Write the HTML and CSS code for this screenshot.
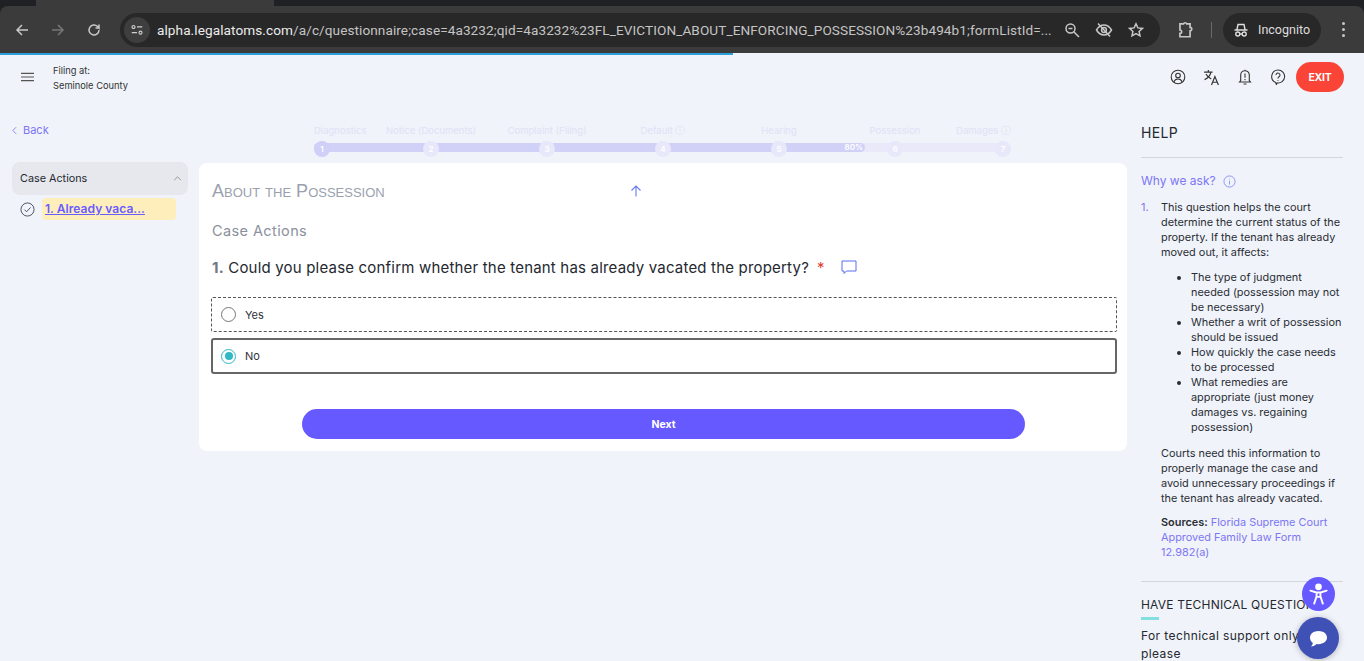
FILE: index.html
```html
<!DOCTYPE html>
<html lang="en">
<head>
<meta charset="utf-8">
<title>Questionnaire</title>
<link rel="stylesheet" href="styles.css">
</head>
<body>
<div class="browser">
  <div class="tabstrip"><div class="tab"></div></div>
  <div class="toolbar">
    <svg class="bi nav-first" viewBox="0 0 16 16"><path d="M14 8H3M8 3 3 8l5 5"/></svg>
    <svg class="bi dim" viewBox="0 0 16 16"><path d="M2 8h11M8 3l5 5-5 5"/></svg>
    <svg class="bi" viewBox="0 0 16 16"><path d="M13 8a5 5 0 1 1-1.6-3.7L13 6V2.5M13 6H9.5"/></svg>
    <div class="omnibox">
      <span class="site-btn"><svg viewBox="0 0 16 16"><circle cx="4" cy="4.500" r="1.700"/><path d="M8 4.500h6M2 11h6"/><circle cx="12" cy="11" r="1.700"/></svg></span>
      <span class="url"><b>alpha.legalatoms.com</b>/a/c/questionnaire;case=4a3232;qid=4a3232%23FL_EVICTION_ABOUT_ENFORCING_POSSESSION%23b494b1;formListId=...</span>
      <svg class="bi zoom-ic" viewBox="0 0 16 16"><circle cx="6.500" cy="6.500" r="4.500"/><path d="m10 10 5 5M4.500 6.500h4"/></svg>
      <svg class="bi eye-ic" viewBox="0 0 18 16"><path d="M1.500 8S4.500 3 9 3s7.500 5 7.500 5-3 5-7.500 5-7.500-5-7.500-5Z"/><circle cx="9" cy="8" r="2.400"/><path d="m3 1.500 12 13"/></svg>
      <svg class="bi star-ic" viewBox="0 0 16 16"><path d="m8 1.800 1.900 4.100 4.500.5-3.300 3 .9 4.400L8 11.600l-4 2.200.9-4.400-3.300-3 4.500-.5Z"/></svg>
    </div>
    <svg class="bi ext-ic" viewBox="0 0 16 16"><path d="M3.500 2.500h3.200a1.500 1.500 0 0 1 2.800 0h3v3.200a1.500 1.500 0 0 1 0 3V14h-9v-3a1.500 1.500 0 0 0 0-3Z"/></svg>
    <span class="tool-sep"></span>
    <div class="incognito">
      <svg viewBox="0 0 16 16"><path d="M1.500 8h13M4 7.500l1-5h6l1 5"/><circle cx="4.800" cy="12" r="2"/><circle cx="11.200" cy="12" r="2"/><path d="M6.800 12h2.400"/></svg>
      <span>Incognito</span>
    </div>
    <span class="kebab"><i></i><i></i><i></i></span>
  </div>
</div>
<div class="load-line"><span></span></div>

<header class="app-head">
  <svg class="menu-ic" viewBox="0 0 14 10"><path d="M0 1h14M0 5h14M0 9h14"/></svg>
  <div class="filing"><p>Filing at:</p><p>Seminole County</p></div>
  <div class="head-actions">
    <svg class="hi" viewBox="0 0 16 16"><circle cx="8" cy="8" r="6.800"/><circle cx="8" cy="6.500" r="2.300"/><path d="M3.800 13c.8-2.200 2.400-3 4.200-3s3.400.8 4.200 3"/></svg>
    <svg class="hi tr" viewBox="0 0 16 16"><path d="M1 3h8M5 1v2M7.500 3c-.6 3-2.700 5.500-6 7M2.800 4.800c1 2.200 3 3.700 5 4.600M8 15l3.200-8 3.300 8M9.200 12.500h4.200"/></svg>
    <svg class="hi" viewBox="0 0 16 16"><path d="M2.500 13h11l-1.200-1.500V6a4.300 4.300 0 0 0-8.600 0v5.500ZM6.500 15h3M8 .8v.9M8 4.500v4.200M8 10v1.200"/></svg>
    <svg class="hi" viewBox="0 0 16 16"><path d="M8 1a6.500 6.500 0 1 1-1 12.900l-.5 1.600-1.200-2.200A6.500 6.500 0 0 1 8 1Z"/><path d="M6 6a2 2 0 1 1 3 1.800c-.7.400-1 .8-1 1.600M8 11v.7"/></svg>
    <button class="exit">EXIT</button>
  </div>
</header>

<div class="layout">
  <aside class="left">
    <a class="back"><svg viewBox="0 0 6 10"><path d="M5 1 1 5l4 4"/></svg>Back</a>
    <div class="acc-head"><span>Case Actions</span><svg viewBox="0 0 10 6"><path d="m1 5 4-4 4 4"/></svg></div>
    <div class="acc-item">
      <svg viewBox="0 0 16 16"><circle cx="8" cy="8" r="7"/><path d="m4.800 8.200 2.200 2.200 4.200-4.600"/></svg>
      <a class="acc-link">1. Already vaca...</a>
    </div>
  </aside>

  <main class="center">
    <ol class="stepper">
      <li class="done first"><span class="lbl">Diagnostics</span><span class="dot">1</span></li>
      <li class="done"><span class="lbl">Notice (Documents)</span><span class="dot">2</span></li>
      <li class="done"><span class="lbl">Complaint (Filing)</span><span class="dot">3</span></li>
      <li class="done"><span class="lbl">Default ⓘ</span><span class="dot">4</span></li>
      <li class="done"><span class="lbl">Hearing</span><span class="dot">5</span></li>
      <li><span class="lbl">Possession</span><span class="dot">6</span></li>
      <li class="last"><span class="lbl">Damages ⓘ</span><span class="dot">7</span></li>
      <li class="track" aria-hidden="true"><span class="fill">80%</span></li>
    </ol>
    <section class="card">
      <div class="card-title">
        <h1>About the Possession</h1>
        <svg class="up" viewBox="0 0 12 12"><path d="M6 11.500V1M1.500 5.500 6 1l4.500 4.500"/></svg>
      </div>
      <h2>Case Actions</h2>
      <div class="question">
        <p><b>1.</b> Could you please confirm whether the tenant has already vacated the property?<em>*</em></p>
        <svg viewBox="0 0 16 16"><path d="M1 2h14v10H5.500L3 14.500V12H1Z"/></svg>
      </div>
      <label class="opt yes"><span class="radio"></span>Yes</label>
      <label class="opt no"><span class="radio on"></span>No</label>
      <button class="next">Next</button>
    </section>
  </main>

  <aside class="help">
    <h3>HELP</h3>
    <div class="why">Why we ask? <svg viewBox="0 0 14 14"><circle cx="7" cy="7" r="6"/><path d="M7 6.300v4M7 4v.8"/></svg></div>
    <div class="help-item">
      <span class="num">1.</span>
      <div class="help-body">
        <p>This question helps the court determine the current status of the property. If the tenant has already moved out, it affects:</p>
        <ul>
          <li>The type of judgment needed (possession may not be necessary)</li>
          <li>Whether a writ of possession should be issued</li>
          <li>How quickly the case needs to be processed</li>
          <li>What remedies are appropriate (just money damages vs. regaining possession)</li>
        </ul>
        <p class="courts">Courts need this information to properly manage the case and avoid unnecessary proceedings if the tenant has already vacated.</p>
        <p class="src"><b>Sources:</b> <a>Florida Supreme Court Approved Family Law Form 12.982(a)</a></p>
      </div>
    </div>
    <div class="tech">
      <h4>HAVE TECHNICAL QUESTIONS?</h4>
      <span class="tech-bar"></span>
      <p>For technical support only, please</p>
    </div>
  </aside>
</div>

<button class="fab-a11y" aria-label="Accessibility"><svg viewBox="0 0 24 24"><circle cx="12" cy="4.500" r="2.500"/><path d="M3.500 8.500 10 10.500v4L7.500 22M20.500 8.500 14 10.500v4l2.500 7.500M10 10.500h4M11 15h2"/></svg></button>
<button class="fab-chat" aria-label="Chat"><svg viewBox="0 0 20 18"><path d="M10 1c5 0 9 2.900 9 7s-4 7-9 7c-.8 0-1.500-.1-2.200-.2C6.500 16.400 4.500 17.300 2 17.500c1-1 1.800-2.200 2-3.700C2.300 12.500 1 10.400 1 8c0-4.100 4-7 9-7Z"/></svg></button>
</body>
</html>
```
FILE: styles.css
```css
* { box-sizing: border-box; }
html, body { height: 100%; }
body {
  margin: 0;
  height: 661px;
  overflow: hidden;
  background: #f0f3f9;
  color: #25282f;
  font-family: Inter, "Liberation Sans", sans-serif;
  position: relative;
}
p, h1, h2, h3, h4, ul, ol { margin: 0; padding: 0; }

/* browser chrome */
.browser { height: 53px; background: #202124; }
.tabstrip { height: 6px; background: #202124; padding-left: 36px; }
.tab { width: 238px; height: 6px; background: #3b3b3b; }
.toolbar { height: 47px; display: flex; align-items: center; padding-left: 14px; background: #3b3b3b; border-radius: 8px 8px 0 0; }
.bi { width: 16px; height: 16px; fill: none; stroke: #c7c7c7; stroke-width: 1.500; flex: none; }
.bi.dim { stroke: #777; margin-left: 20px; }
.bi.dim + .bi { margin-left: 20px; }
.omnibox { margin-left: 18px; width: 1040px; height: 34px; background: #282828; border-radius: 17px; display: flex; align-items: center; padding-left: 4px; flex: none; }
.site-btn { width: 26px; height: 26px; border-radius: 50%; background: #3e3e3e; display: flex; align-items: center; justify-content: center; flex: none; }
.site-btn svg { width: 14px; height: 14px; fill: none; stroke: #d0d0d0; stroke-width: 1.300; }
.url { margin-left: 7px; width: 907px; flex: none; font: 13.600px/18px Roboto, "Liberation Sans", sans-serif; letter-spacing: .08px; color: #c4c4c4; white-space: nowrap; overflow: hidden; }
.url b { font-weight: 400; color: #ececec; }
.eye-ic { width: 18px; margin-left: 15px; }
.star-ic { margin-left: 15px; }
.ext-ic { margin-left: 16px; width: 18px; height: 18px; }
.tool-sep { width: 1px; height: 16px; background: #6a6a6a; margin-left: 17px; }
.incognito { margin-left: 11px; width: 98px; height: 34px; background: #282828; border-radius: 17px; display: flex; align-items: center; padding-left: 10px; gap: 9px; color: #dedede; font: 12.500px Roboto, "Liberation Sans", sans-serif; flex: none; }
.incognito svg { width: 16px; height: 16px; fill: none; stroke: #dedede; stroke-width: 1.400; }
.kebab { margin-left: 21px; display: flex; flex-direction: column; gap: 3px; }
.kebab i { width: 3px; height: 3px; border-radius: 50%; background: #c7c7c7; display: block; }
.load-line { height: 2px; background: #f0f3f9; }
.load-line span { display: block; width: 733px; height: 2px; background: #2a9fd8; }

/* app header */
.app-head { height: 44px; display: flex; align-items: center; padding: 0 20px 0 21px; }
.menu-ic { width: 13px; height: 10px; fill: none; stroke: #555; stroke-width: 1.300; flex: none; }
.filing { margin-left: 19px; padding-top: 1px; font-size: 9.300px; line-height: 15px; color: #333; }
.head-actions { margin-left: auto; display: flex; align-items: center; }
.hi { width: 16px; height: 16px; fill: none; stroke: #333; stroke-width: 1.100; margin-right: 17px; flex: none; }
.hi.tr { width: 17px; height: 17px; }
.exit { width: 48px; height: 30px; margin-left: -7px; border: 0; border-radius: 15px; background: #fb4438; color: #fff; font: 700 10.500px Inter, sans-serif; letter-spacing: -.3px; padding: 0; }

/* layout */
.layout { display: grid; grid-template-columns: 176px 928px 205px; column-gap: 11px; padding-left: 12px; align-items: start; }
.layout > .help { margin-left: 3px; }

/* left */
.left { padding-top: 24px; }
.back { display: flex; align-items: center; gap: 6px; font-size: 11px; line-height: 14px; color: #7d76f5; }
.back svg { width: 5px; height: 9px; fill: none; stroke: #7d76f5; stroke-width: 1; }
.acc-head { margin-top: 25px; height: 33px; background: #e6e8ee; border-radius: 8px; display: flex; align-items: center; justify-content: space-between; padding: 0 6px 0 8px; font-size: 10.800px; color: #25282f; }
.acc-head svg { width: 9px; height: 5px; fill: none; stroke: #888; stroke-width: 1; }
.acc-item { margin-top: 3px; display: flex; align-items: center; gap: 7px; padding-left: 8px; }
.acc-item svg { width: 15px; height: 15px; fill: none; stroke: #444d5e; stroke-width: 1; flex: none; }
.acc-link { width: 134px; height: 22px; background: #feeebc; border-radius: 4px; padding-left: 3px; font-size: 12.100px; font-weight: 600; line-height: 22px; color: #6a5cff; text-decoration: underline; }

/* stepper */
.stepper { list-style: none; height: 64px; display: grid; grid-template-columns: 109px 116px 116px 116px 116px 108px 16px; padding: 25px 0 0 115px; position: relative; }
.stepper li { position: relative; height: 32px; }
.stepper .lbl { position: absolute; top: 0; left: 8px; transform: translateX(-50%); white-space: nowrap; font-size: 9.500px; line-height: 14px; color: #e0e1f8; }
.stepper .first .lbl { left: 0; transform: none; }
.stepper .last .lbl { left: auto; right: 0; transform: none; }
.stepper .dot { position: absolute; top: 17px; left: 0; width: 16px; height: 16px; border-radius: 50%; background: #e8e8fb; color: #fff; font-size: 8px; font-weight: 600; line-height: 16px; text-align: center; z-index: 1; }
.stepper .first .dot { background: #cfcff8; }
.stepper li.track { position: absolute; left: 115px; top: 44px; width: 696px; height: 9px; border-radius: 5px; background: #e9e9fa; }
.fill { display: block; width: 551px; height: 9px; background: #d1d1f8; border-radius: 5px; color: #fff; font-size: 8px; font-weight: 600; line-height: 9px; text-align: right; padding-right: 2px; }

/* card */
.card { height: 288px; background: #fff; border-radius: 8px; padding: 13px 10px 0 12px; }
.card-title { display: flex; align-items: center; position: relative; height: 30px; }
.card-title h1 { margin-left: 1px; font-family: "Liberation Sans", sans-serif; font-weight: 400; font-size: 18px; font-variant: small-caps; color: #9aa1ad; }
.up { width: 12px; height: 12px; fill: none; stroke: #6a7cf0; stroke-width: 1.100; position: absolute; left: 419px; top: 9px; }
h2 { margin: 15px 0 0 1px; font-weight: 400; font-size: 14.500px; line-height: 20px; letter-spacing: .4px; color: #8b919c; }
.question { margin-top: 16px; display: flex; align-items: center; height: 20px; margin-left: 1px; }
.question p { font-size: 15px; letter-spacing: .19px; color: #25282f; white-space: nowrap; }
.question b { font-weight: 700; color: #6f7885; }
.question em { font-style: normal; color: #e23b2e; margin-left: 8px; }
.question svg { width: 16px; height: 16px; margin-left: 16px; fill: none; stroke: #5a6cf0; stroke-width: 1; }
.opt { display: flex; align-items: center; width: 906px; height: 35px; font-size: 11px; color: #2f323a; padding-left: 9px; gap: 9px; }
.opt.yes { margin-top: 20px; border: 1px dashed #555; border-radius: 2px; }
.opt.no { margin-top: 6px; border: 2px solid #666; border-radius: 3px; padding-left: 8px; height: 36px; }
.radio { width: 15px; height: 15px; border: 1px solid #777; border-radius: 50%; background: #fff; flex: none; }
.radio.on { border-color: #30b8c4; position: relative; }
.radio.on::after { content: ""; position: absolute; inset: 2.500px; border-radius: 50%; background: #30b8c4; }
.next { display: block; width: 723px; height: 30px; margin: 35px 0 0 91px; border: 0; border-radius: 15px; background: #6659ff; color: #fff; font: 700 10.500px Inter, sans-serif; }

/* help */
.help { padding-top: 24px; }
.help h3 { font-weight: 400; font-size: 14px; line-height: 20px; letter-spacing: .3px; padding-bottom: 14px; border-bottom: 1px solid #d2d5dc; color: #25282f; }
.why { margin-top: 15px; font-size: 12px; line-height: 16px; color: #7d76f5; display: flex; align-items: center; gap: 7px; }
.why svg { width: 13px; height: 13px; fill: none; stroke: #7d86f5; stroke-width: .9; }
.help-item { display: flex; margin-top: 11px; font-size: 10.900px; line-height: 15px; color: #2a2d35; }
.num { width: 20px; color: #7d76f5; flex: none; }
.help-body ul { padding: 0 0 0 30px; margin-top: 10px; }
.courts { margin-top: 11px; }
.src { margin-top: 9px; }
.src b { font-weight: 600; }
.src a { color: #7d76f5; }
.tech { margin-top: 21px; border-top: 1px solid #d2d5dc; padding-top: 15px; }
.tech h4 { font-weight: 400; font-size: 12px; line-height: 16px; letter-spacing: .2px; white-space: nowrap; color: #25282f; }
.tech-bar { display: block; width: 18px; height: 3px; background: #84e0e0; margin-top: 4px; }
.tech p { margin-top: 7px; font-size: 12px; line-height: 18px; letter-spacing: .4px; }

/* floating buttons */
.fab-a11y { position: absolute; left: 1302px; top: 577px; width: 33px; height: 34px; border-radius: 50%; border: 0; background: #6659ff; padding: 5px; display: flex; }
.fab-a11y svg { width: 23px; height: 24px; fill: #fff; stroke: #fff; stroke-width: 2; stroke-linecap: round; }
.fab-a11y svg path { fill: none; }
.fab-chat { position: absolute; left: 1297px; top: 617px; width: 42px; height: 42px; border-radius: 50%; border: 0; background: #3f51b5; box-shadow: 0 1px 6px rgba(0,0,0,.25); padding: 0; display: flex; align-items: center; justify-content: center; }
.fab-chat svg { width: 19px; height: 17px; fill: #fff; }
```
